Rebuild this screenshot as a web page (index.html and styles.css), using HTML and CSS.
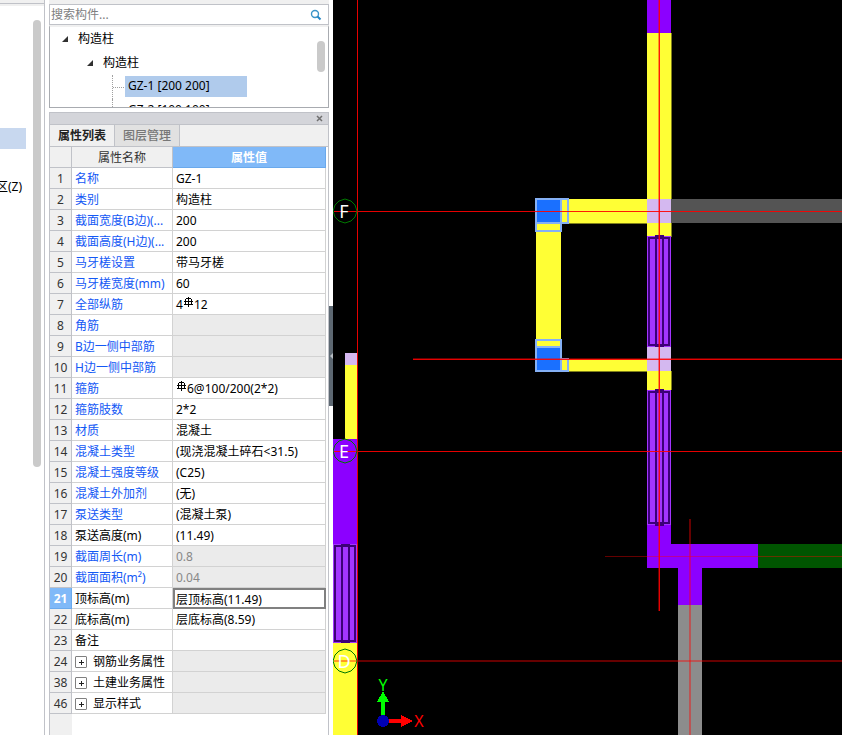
FILE: index.html
```
<!DOCTYPE html>
<html lang="zh-CN">
<head>
    <meta charset="utf-8">
    <title>构造柱</title>
    <link rel="stylesheet" href="styles.css">
</head>
<body>
    <div class="app">
        <!-- 左侧导航 -->
        <aside class="nav">
            <div class="nav-top"></div>
            <div class="nav-body">
                <div class="nav-list">
                    <a href="#" class="nav-item active" aria-label="当前"></a>
                    <a href="#" class="nav-item"><span>区(Z)</span></a>
                </div>
                <div class="nav-scroll"></div>
            </div>
        </aside>

        <div class="panel">
            <!-- 构件列表 -->
            <section class="components">
                <div class="search">
                    <input type="text" id="search" placeholder="搜索构件..." aria-label="搜索构件">
                    <svg width="12" height="12" viewBox="0 0 12 12">
                        <circle cx="5" cy="5" r="3.5" fill="none" stroke="#3a94c8" stroke-width="1.4"/>
                        <path d="M7.5 7.5L10.5 10.5" stroke="#2385c4" stroke-width="2"/>
                    </svg>
                </div>
                <div class="tree">
                    <ul class="tree-list">
                        <li class="level1"><svg class="arrow" width="6" height="6"><path d="M6 0V6H0Z"/></svg>构造柱</li>
                        <li class="level2"><svg class="arrow" width="6" height="6"><path d="M6 0V6H0Z"/></svg>构造柱</li>
                        <li class="level3"><span class="branch"></span><span class="leaf selected">GZ-1 [200 200]</span></li>
                        <li class="level3"><span class="branch"></span><span class="leaf">GZ-2 [100 100]</span></li>
                    </ul>
                    <div class="tree-scroll"></div>
                </div>
            </section>

            <!-- 属性 -->
            <section class="properties">
                <div class="title-bar">
                    <button class="close" aria-label="关闭">
                        <svg width="7" height="7" viewBox="0 0 7 7"><path d="M1 1L6 6M6 1L1 6" stroke="#707070" stroke-width="1.5"/></svg>
                    </button>
                </div>
                <div class="tabs">
                    <button class="tab active">属性列表</button>
                    <button class="tab">图层管理</button>
                </div>
                <div class="prop-body">
                    <table class="prop-table">
                        <thead>
                            <tr><th class="num"></th><th class="name">属性名称</th><th class="current">属性值</th></tr>
                        </thead>
                        <tbody>
                            <tr><th>1</th><td class="blue">名称</td><td>GZ-1</td></tr>
                            <tr><th>2</th><td class="blue">类别</td><td>构造柱</td></tr>
                            <tr><th>3</th><td class="blue">截面宽度(B边)(...</td><td>200</td></tr>
                            <tr><th>4</th><td class="blue">截面高度(H边)(...</td><td>200</td></tr>
                            <tr><th>5</th><td class="blue">马牙槎设置</td><td>带马牙槎</td></tr>
                            <tr><th>6</th><td class="blue">马牙槎宽度(mm)</td><td>60</td></tr>
                            <tr><th>7</th><td class="blue">全部纵筋</td><td>4<svg class="rebar" width="11" height="10"><path d="M5.5 0V10M1 4.500H10M1 7.500H10M3 1.500H8M2.500 2V7M8.500 2V7"/></svg>12</td></tr>
                            <tr><th>8</th><td class="blue">角筋</td><td class="off"></td></tr>
                            <tr><th>9</th><td class="blue">B边一侧中部筋</td><td class="off"></td></tr>
                            <tr><th>10</th><td class="blue">H边一侧中部筋</td><td class="off"></td></tr>
                            <tr><th>11</th><td class="blue">箍筋</td><td><svg class="rebar" width="11" height="10"><path d="M5.5 0V10M1 4.500H10M1 7.500H10M3 1.500H8M2.500 2V7M8.500 2V7"/></svg>6@100/200(2*2)</td></tr>
                            <tr><th>12</th><td class="blue">箍筋肢数</td><td>2*2</td></tr>
                            <tr><th>13</th><td class="blue">材质</td><td>混凝土</td></tr>
                            <tr><th>14</th><td class="blue">混凝土类型</td><td>(现浇混凝土碎石&lt;31.5)</td></tr>
                            <tr><th>15</th><td class="blue">混凝土强度等级</td><td>(C25)</td></tr>
                            <tr><th>16</th><td class="blue">混凝土外加剂</td><td>(无)</td></tr>
                            <tr><th>17</th><td class="blue">泵送类型</td><td>(混凝土泵)</td></tr>
                            <tr><th>18</th><td>泵送高度(m)</td><td>(11.49)</td></tr>
                            <tr><th>19</th><td class="blue">截面周长(m)</td><td class="off">0.8</td></tr>
                            <tr><th>20</th><td class="blue">截面面积(m²)</td><td class="off">0.04</td></tr>
                            <tr><th class="current">21</th><td><label for="top">顶标高(m)</label></td><td class="editing"><input type="text" id="top" value="层顶标高(11.49)"></td></tr>
                            <tr><th>22</th><td>底标高(m)</td><td>层底标高(8.59)</td></tr>
                            <tr><th>23</th><td>备注</td><td></td></tr>
                            <tr><th>24</th><td><div class="group"><button class="expand" aria-label="展开"></button>钢筋业务属性</div></td><td class="off"></td></tr>
                            <tr><th>38</th><td><div class="group"><button class="expand" aria-label="展开"></button>土建业务属性</div></td><td class="off"></td></tr>
                            <tr><th>46</th><td><div class="group"><button class="expand" aria-label="展开"></button>显示样式</div></td><td class="off"></td></tr>
                        </tbody>
                    </table>
                    <div class="num-rest"></div>
                </div>
            </section>
        </div>

        <div class="splitter">
            <button class="handle" aria-label="折叠">
                <svg width="3" height="6"><path d="M3 0V6L0 3Z" fill="#b8bec4"/></svg>
            </button>
        </div>

        <!-- 绘图区 -->
        <main class="canvas">
            <svg class="drawing" width="100%" height="100%">
                <!-- 墙 -->
                <g class="wall">
                    <rect x="314" y="33" width="24" height="204"/>
                    <rect x="203" y="199" width="111" height="24"/>
                    <rect x="203" y="199" width="25" height="172"/>
                    <rect x="228" y="359" width="86" height="12"/>
                    <rect x="314" y="371" width="24" height="19"/>
                    <rect x="12" y="365" width="12" height="74"/>
                    <rect x="0" y="642" width="24" height="100%"/>
                </g>
                <g class="wall-edge">
                    <rect x="338" y="33" width="1" height="204"/>
                    <rect x="235" y="223" width="79" height="1"/>
                    <rect x="235" y="371" width="79" height="1"/>
                    <rect x="338" y="371" width="1" height="19"/>
                </g>
                <rect class="gray-dark" x="338" y="199" width="100%" height="24"/>
                <rect class="gray" x="345" y="605" width="24" height="100%"/>
                <rect class="green" x="425" y="544" width="100%" height="24"/>
                <g class="purple">
                    <rect x="314" y="0" width="24" height="33"/>
                    <rect x="314" y="525" width="24" height="43"/>
                    <rect x="314" y="544" width="111" height="24"/>
                    <rect x="345" y="568" width="24" height="37"/>
                    <rect x="0" y="439" width="24" height="105"/>
                </g>
                <g class="lilac">
                    <rect x="314" y="199" width="24" height="24"/>
                    <rect x="314" y="347" width="24" height="24"/>
                    <rect x="12" y="353" width="12" height="12"/>
                </g>
                <!-- 窗 -->
                <g class="window">
                    <rect class="fill" x="314" y="236" width="24" height="111"/>
                    <rect x="316" y="238" width="20" height="107"/>
                    <rect x="323" y="236" width="7" height="110"/>
                    <rect class="fill" x="314" y="390" width="24" height="135"/>
                    <rect x="316" y="392" width="20" height="131"/>
                    <rect x="323" y="390" width="7" height="135"/>
                    <rect class="fill" x="0" y="544" width="24" height="99"/>
                    <rect x="2" y="546" width="20" height="95"/>
                    <rect x="9" y="545" width="7" height="97"/>
                </g>
                <!-- 构造柱 -->
                <g class="column">
                    <path d="M203 223V231H228V223M228 199H235V223H228"/>
                    <rect x="203" y="199" width="25" height="24"/>
                    <path d="M203 347V340H228V347M228 359H235V371H228"/>
                    <rect x="203" y="347" width="25" height="24"/>
                </g>
                <g class="column-fill">
                    <rect x="204" y="200" width="23" height="22"/>
                    <rect x="204" y="348" width="23" height="22"/>
                </g>
                <!-- 轴线 -->
                <g class="axis">
                    <rect x="24" y="0" width="1" height="100%"/>
                    <rect x="1" y="211" width="100%" height="1"/>
                    <rect x="80" y="359" width="100%" height="1"/>
                    <rect x="1" y="451" width="100%" height="1"/>
                    <rect x="326" y="0" width="1" height="611"/>
                    <g class="half">
                        <rect x="80" y="358" width="100%" height="1"/>
                        <rect x="325" y="0" width="1" height="611"/>
                        <rect x="272" y="556" width="100%" height="1"/>
                        <rect x="1" y="660" width="100%" height="2"/>
                        <rect x="356" y="519" width="2" height="100%"/>
                    </g>
                </g>
                <g class="bubble">
                    <path d="M12 199L18 201L22 205L24 211L22 217L18 221L12 223L6 221L2 217L0 211L2 205L6 201Z"/>
                    <path d="M12 439L18 441L22 445L24 451L22 457L18 461L12 463L6 461L2 457L0 451L2 445L6 441Z"/>
                    <path d="M12 649L18 651L22 655L24 661L22 667L18 671L12 673L6 671L2 667L0 661L2 655L6 651Z"/>
                    <text x="11" y="218">F</text>
                    <text x="11" y="458">E</text>
                    <text x="11" y="668">D</text>
                </g>
                <!-- 坐标系 -->
                <path d="M48 718V702H44L50 691L56 702H52V718Z" fill="#00ff00"/>
                <path d="M54 719H68V715L80 721L68 727V723H54Z" fill="#ff0000"/>
                <circle cx="50" cy="721" r="6" fill="#0000b4"/>
                <text class="coord y" x="50" y="691">Y</text>
                <text class="coord x" x="86" y="727">X</text>
            </svg>
        </main>
    </div>
</body>
</html>
```
FILE: styles.css
```
/* Base */
* {
    box-sizing: border-box;
}

body {
    margin: 0;
    font-family: 'Noto Sans', 'Noto Sans CJK SC', sans-serif;
    font-size: 12px;
    line-height: 20px;
    color: #000;
    background-color: #fff;
}

button, input {
    font: inherit;
    padding: 0;
    margin: 0;
    border: none;
    background: none;
}

.app {
    display: flex;
    min-height: 100vh;
}

/* Navegação da esquerda */
.nav {
    display: flex;
    flex-direction: column;
    width: 45px;
    flex-shrink: 0;
    border-right: 1px solid #c0c2c8;
}

.nav-top {
    height: 6px;
    background-color: #f0f0f0;
    border-bottom: 2px solid #f0f0f0;
    box-shadow: inset 0 -1px 0 #c0c2c8;
}

.nav-body {
    display: flex;
    justify-content: space-between;
    padding: 14px 3px 0 0;
}

.nav-list {
    display: flex;
    flex-direction: column;
    gap: 28px;
    width: 26px;
    padding-top: 108px;
}

.nav-item {
    display: flex;
    justify-content: flex-end;
    height: 21px;
    padding-right: 4px;
    overflow: hidden;
    white-space: nowrap;
    color: #000;
    text-decoration: none;
}

.nav-item.active {
    background-color: #c8d8ef;
}

.nav-scroll {
    width: 8px;
    height: 447px;
    border-radius: 4px;
    background-color: #cacaca;
}

/* Painel */
.panel {
    display: flex;
    flex-direction: column;
    width: 284px;
    flex-shrink: 0;
    padding-left: 4px;
}

.components {
    border-top: 4px solid #f0f0f0;
}

.search {
    display: flex;
    align-items: center;
    height: 21px;
    padding-right: 6px;
    border: 1px solid #c0c2c8;
}

.search input {
    flex: 1;
    min-width: 0;
    padding-left: 1px;
    outline: none;
}

.search input::placeholder {
    color: #808080;
    opacity: 1;
}

.tree {
    display: flex;
    justify-content: space-between;
    height: 83px;
    overflow: hidden;
    border: 1px solid #a8abb0;
    border-top: 2px solid #f0f0f0;
}

.tree-list {
    list-style: none;
    margin: 0;
    padding: 0;
}

.tree-list li {
    display: flex;
    align-items: center;
    height: 24px;
}

.tree-list .level1 {
    padding-left: 12px;
}

.tree-list .level2 {
    padding-left: 37px;
}

.tree-list .level3 {
    align-items: flex-start;
    padding-left: 62px;
}

.arrow {
    margin-right: 10px;
    fill: #303030;
}

.branch {
    align-self: stretch;
    width: 13px;
    border-left: 1px dotted #a0a0a0;
    background: repeating-linear-gradient(90deg, #a0a0a0 0 1px, transparent 1px 2px) 0 12px / 11px 1px no-repeat;
}

.leaf {
    width: 122px;
    height: 21px;
    margin-top: 1px;
    padding-left: 3px;
}

.leaf.selected {
    background-color: #b0cbec;
}

.tree-scroll {
    width: 8px;
    height: 31px;
    margin: 14px 3px 0 0;
    border-radius: 4px;
    background-color: #cacaca;
}

/* Propriedades */
.properties {
    display: flex;
    flex-direction: column;
    flex: 1;
    margin-top: 4px;
    border: 1px solid #c0c2c8;
    border-bottom: none;
}

.title-bar {
    display: flex;
    justify-content: flex-end;
    align-items: center;
    height: 12px;
    padding-right: 5px;
    background-color: #d4d5da;
    border-bottom: 1px solid #c0c2c8;
}

.close {
    display: flex;
}

.tabs {
    display: flex;
    height: 22px;
    background-color: #f0f0f0;
    border-bottom: 1px solid #c0c2c8;
}

.tab {
    width: 65px;
    color: #777;
    font-weight: 500;
    background-color: #e1e1e1;
    border-right: 1px solid #c0c2c8;
}

.tab.active {
    color: #222;
    font-weight: bold;
    background-color: #f0f0f0;
}

.prop-body {
    display: flex;
    flex-direction: column;
    flex: 1;
    padding-right: 2px;
}

.prop-table {
    width: 100%;
    table-layout: fixed;
    border-collapse: separate;
    border-spacing: 0;
}

.prop-table th,
.prop-table td {
    height: 21px;
    padding: 2px 0 0 3px;
    line-height: 18px;
    text-align: left;
    white-space: nowrap;
    overflow: hidden;
    border-right: 1px solid #d2d2d2;
    border-bottom: 1px solid #d2d2d2;
}

.prop-table th {
    padding: 2px 0 0;
    color: #333;
    font-weight: normal;
    text-align: center;
    background-color: #f0f0f0;
    border-color: #c0c2c8;
}

.prop-table .num {
    width: 22px;
}

.prop-table .name {
    width: 101px;
}

.prop-table th.current {
    color: #fff;
    font-weight: bold;
    background-color: #80b9f8;
    border-color: #6aa9ec;
}

.prop-table .blue {
    color: #1358f5;
}

.prop-table .off {
    color: #888;
    background-color: #ebebeb;
}

.prop-table .editing {
    padding: 0;
    border: none;
}

.editing input {
    display: block;
    width: 100%;
    height: 21px;
    padding-left: 1px;
    border: 2px solid #808080;
    outline: none;
}

.rebar {
    fill: none;
    stroke: #000;
    stroke-width: 1;
    vertical-align: 2px;
}

.group {
    display: flex;
    align-items: center;
    gap: 6px;
}

.expand {
    width: 12px;
    height: 12px;
    border: 1px solid #808080;
    border-radius: 1px;
    background:
        linear-gradient(#222, #222) center / 5px 1px no-repeat,
        linear-gradient(#222, #222) center / 1px 5px no-repeat;
}

.num-rest {
    flex: 1;
    width: 22px;
    background-color: #f0f0f0;
}

/* Divisor */
.splitter {
    width: 4px;
    flex-shrink: 0;
    padding-top: 306px;
    background-color: #fff;
}

.handle {
    display: flex;
    justify-content: center;
    align-items: center;
    width: 4px;
    height: 100px;
    background-color: #5d6872;
}

/* Desenho */
.canvas {
    display: flex;
    flex: 1;
    min-width: 0;
    background-color: #000;
}

.drawing {
    flex: 1;
    height: auto;
    min-width: 0;
    shape-rendering: crispEdges;
}

.wall {
    fill: #ffff35;
}

.wall-edge {
    fill: #80801a;
}

.purple {
    fill: #8c00ff;
}

.lilac {
    fill: #d4b8f0;
}

.gray {
    fill: #8c8c8c;
}

.gray-dark {
    fill: #545454;
}

.green {
    fill: #005500;
}

.window rect {
    fill: none;
    stroke: #3c0078;
    stroke-width: 2;
}

.window .fill {
    fill: #a335ff;
    stroke: none;
}

.column {
    fill: none;
    stroke: #85b0f5;
    stroke-width: 2;
}

.column-fill {
    fill: #1a70ff;
}

.axis {
    fill: #ff0000;
    fill-opacity: 0.9;
}

.axis .half {
    fill-opacity: 0.4;
}

.bubble path {
    fill: none;
    stroke: #007800;
    shape-rendering: auto;
}

.bubble text {
    fill: #fff;
    font-size: 18px;
    text-anchor: middle;
}

.coord {
    font-size: 16px;
    text-anchor: middle;
}

.coord.y {
    fill: #00ff00;
}

.coord.x {
    fill: #ff0000;
}
```
